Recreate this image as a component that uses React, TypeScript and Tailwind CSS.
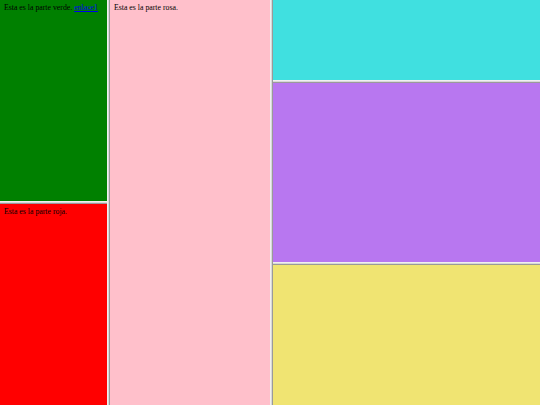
export default function App() {
  const text = "text-[7.8px] leading-[10px] text-black px-[4px] pt-[3px] whitespace-nowrap";
  return (
    <div className="flex h-[405px] w-[540px] overflow-hidden bg-[#d4d4d4] font-['Liberation_Serif',serif]">
      {/* left column */}
      <div className="flex w-[107px] flex-col">
        <div className={`h-[201px] bg-[#008000] ${text}`}>
          Esta es la parte verde. <a href="#" className="text-[#0000ee] underline">enlace1</a>
        </div>
        <div className="h-[3px] border-t border-[#f0f0f0] border-b border-b-[#9a9a9a] bg-[#d8d8d8]" />
        <div className={`flex-1 bg-[#ff0000] ${text}`}>Esta es la parte roja.</div>
      </div>
      <div className="w-[3px] border-l border-[#f0f0f0] border-r border-r-[#9a9a9a] bg-[#d8d8d8]" />
      {/* middle */}
      <div className={`w-[160px] bg-[#ffc0cb] ${text}`}>Esta es la parte rosa.</div>
      <div className="w-[3px] border-l border-[#f0f0f0] border-r border-r-[#9a9a9a] bg-[#d8d8d8]" />
      {/* right column */}
      <div className="flex flex-1 flex-col">
        <div className="h-[80px] bg-[#40e0e0]" />
        <div className="h-[3px] border-t border-[#f0f0f0] border-b border-b-[#9a9a9a] bg-[#d8d8d8]" />
        <div className="h-[179px] bg-[#b877f0]" />
        <div className="h-[3px] border-t border-[#f0f0f0] border-b border-b-[#9a9a9a] bg-[#d8d8d8]" />
        <div className="flex-1 bg-[#f0e472]" />
      </div>
    </div>
  );
}
